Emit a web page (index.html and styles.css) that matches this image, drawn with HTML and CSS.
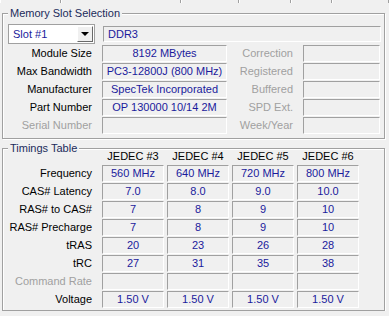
FILE: index.html
```html
<!DOCTYPE html>
<html lang="en">
<head>
    <meta charset="UTF-8">
    <meta name="viewport" content="width=device-width, initial-scale=1.0">
    <title>SPD</title>
    <link rel="stylesheet" href="styles.css">
</head>
<body>

<div class="tabs">
    <div class="tab" style="width: 61px"></div>
    <div class="tab" style="width: 121px"></div>
    <div class="tab" style="width: 58px"></div>
    <div class="tab" style="width: 51px"></div>
    <div class="tab" style="width: 41px"></div>
    <div class="tab" style="width: 57px"></div>
</div>

<div class="group slot">
    <div class="group-title">Memory Slot Selection</div>

    <div class="slot-row">
        <div class="combo">
            <span class="combo-text">Slot #1</span>
            <span class="combo-btn"><span class="arrow"></span></span>
        </div>
        <div class="box type">DDR3</div>
    </div>

    <div class="info">
        <label>Module Size</label>
        <div class="box">8192 MBytes</div>
        <label class="off">Correction</label>
        <div class="box"></div>

        <label>Max Bandwidth</label>
        <div class="box">PC3-12800J (800 MHz)</div>
        <label class="off">Registered</label>
        <div class="box"></div>

        <label>Manufacturer</label>
        <div class="box">SpecTek Incorporated</div>
        <label class="off">Buffered</label>
        <div class="box"></div>

        <label>Part Number</label>
        <div class="box">OP 130000 10/14 2M</div>
        <label class="off">SPD Ext.</label>
        <div class="box"></div>

        <label class="off">Serial Number</label>
        <div class="box"></div>
        <label class="off">Week/Year</label>
        <div class="box"></div>
    </div>
</div>

<div class="group timings">
    <div class="group-title">Timings Table</div>

    <div class="table">
        <span></span>
        <div class="head">JEDEC #3</div>
        <div class="head">JEDEC #4</div>
        <div class="head">JEDEC #5</div>
        <div class="head">JEDEC #6</div>

        <label>Frequency</label>
        <div class="box">560 MHz</div>
        <div class="box">640 MHz</div>
        <div class="box">720 MHz</div>
        <div class="box">800 MHz</div>

        <label>CAS# Latency</label>
        <div class="box">7.0</div>
        <div class="box">8.0</div>
        <div class="box">9.0</div>
        <div class="box">10.0</div>

        <label>RAS# to CAS#</label>
        <div class="box">7</div>
        <div class="box">8</div>
        <div class="box">9</div>
        <div class="box">10</div>

        <label>RAS# Precharge</label>
        <div class="box">7</div>
        <div class="box">8</div>
        <div class="box">9</div>
        <div class="box">10</div>

        <label>tRAS</label>
        <div class="box">20</div>
        <div class="box">23</div>
        <div class="box">26</div>
        <div class="box">28</div>

        <label>tRC</label>
        <div class="box">27</div>
        <div class="box">31</div>
        <div class="box">35</div>
        <div class="box">38</div>

        <label class="off">Command Rate</label>
        <div class="box"></div>
        <div class="box"></div>
        <div class="box"></div>
        <div class="box"></div>

        <label>Voltage</label>
        <div class="box">1.50 V</div>
        <div class="box">1.50 V</div>
        <div class="box">1.50 V</div>
        <div class="box">1.50 V</div>
    </div>
</div>

</body>
</html>
```

FILE: styles.css
```css
body {
    margin: 0;
    background-color: #f0f0f0;
    font-family: "Liberation Sans", Arial, sans-serif;
    font-size: 11px;
    color: #000;
}
.tabs {
    display: flex;
    height: 3px;
}
.tab {
    height: 3px;
    border-right: 1px solid #a0a0a0;
    box-shadow: inset 1px 0 0 #fff;
}
.group {
    position: relative;
    margin: 10px 4px 0 2px;
    border: 1px solid #a0a0a0;
    box-shadow: inset 1px 1px 0 #fff, 1px 1px 0 #fff;
    padding: 0 0 0 5px;
}
.group-title {
    position: absolute;
    top: -7px;
    left: 5px;
    padding: 0 2px;
    line-height: 13px;
    color: #1b2b5b;
    background-color: #f0f0f0;
}
.slot {
    padding-top: 10px;
    padding-bottom: 4px;
}
.slot-row {
    display: flex;
    align-items: center;
    gap: 8px;
}
.combo {
    width: 87px;
    height: 20px;
    box-sizing: border-box;
    border: 1px solid #a0a0a0;
    background: white;
    display: flex;
    align-items: center;
    justify-content: space-between;
    padding: 0 1px 0 4px;
}
.combo-text {
    color: #1a1a9c;
}
.combo-btn {
    width: 16px;
    height: 16px;
    box-sizing: border-box;
    border: 1px solid;
    border-color: #fff #696969 #696969 #fff;
    background-color: #f0f0f0;
    display: flex;
    align-items: center;
    justify-content: center;
}
.arrow {
    width: 0;
    height: 0;
    border-left: 4px solid transparent;
    border-right: 4px solid transparent;
    border-top: 4px solid #000;
}
.box {
    box-sizing: border-box;
    height: 17px;
    line-height: 15px;
    border: 1px solid;
    border-color: #a0a0a0 #fff #fff #a0a0a0;
    color: #1a1a9c;
    text-align: center;
    white-space: nowrap;
    overflow: hidden;
}
.type {
    width: 278px;
    height: 16px;
    line-height: 14px;
    text-align: left;
    padding-left: 4px;
}
.info {
    display: grid;
    grid-template-columns: 84px 125px 56px 77px;
    grid-auto-rows: 17px;
    column-gap: 10px;
    row-gap: 1px;
    margin-top: 1px;
}
label {
    text-align: right;
    line-height: 17px;
    white-space: nowrap;
}
label.off {
    color: #a0a0a0;
}
.timings {
    margin-top: 9px;
    padding-bottom: 2px;
}
.table {
    display: grid;
    grid-template-columns: 91px 62px 62px 62px 62px;
    grid-template-rows: 15px;
    grid-auto-rows: 17px;
    column-gap: 3px;
    row-gap: 1px;
}
.table label {
    padding-right: 7px;
}
.head {
    text-align: center;
    line-height: 15px;
}
```
